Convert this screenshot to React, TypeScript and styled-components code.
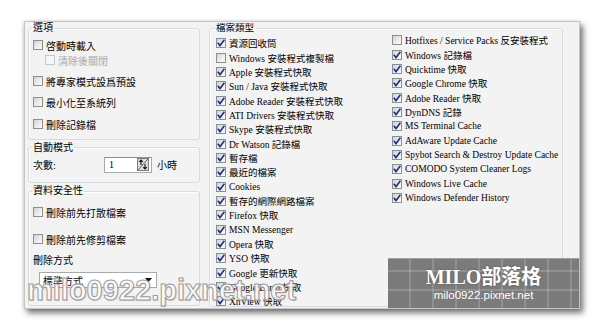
import React from "react";
import styled, { createGlobalStyle } from "styled-components";

const GlobalStyle = createGlobalStyle`
  html, body {
    margin: 0;
    padding: 0;
    background: #fff;
  }
  body {
    width: 600px;
    height: 329px;
    overflow: hidden;
    font-family: "Liberation Serif", "Noto Sans CJK TC", serif;
    font-size: 9.5px;
    color: #000;
  }
`;

const Page = styled.div`
  padding: 21px 0 0 24px;
`;

const Panel = styled.div`
  position: relative;
  box-sizing: border-box;
  width: 556px;
  height: 288px;
  display: flex;
  gap: 9px;
  padding: 0 3px 2px 3px;
  background: #f3f3f3;
  border: 1px solid #c6c6c6;
  box-shadow: 3px 4px 6px rgba(0, 0, 0, 0.55), -1px 0 3px rgba(0, 0, 0, 0.12);
`;

const LeftColumn = styled.div`
  display: flex;
  flex-direction: column;
  gap: 2px;
  width: 172px;
  flex: none;
  font-size: 10px;
`;

const GroupBox = styled.fieldset<{ $h: number; $pl?: number }>`
  box-sizing: border-box;
  margin: 0;
  min-width: 0;
  height: ${(p) => p.$h}px;
  padding: 0 4px 0 ${(p) => p.$pl ?? 4}px;
  border: 1px solid #d3dde3;
  border-radius: 3px;
  box-shadow: inset 1px 1px 0 #fff;
`;

const Legend = styled.legend`
  padding: 0 1px;
  margin-left: -1px;
  line-height: 12px;
  height: 12px;
`;

const CheckRow = styled.div<{ $mt?: number; $indent?: number; $disabled?: boolean; $h?: number }>`
  display: flex;
  align-items: center;
  gap: 3px;
  height: ${(p) => p.$h ?? 14}px;
  margin-top: ${(p) => p.$mt ?? 0}px;
  margin-left: ${(p) => p.$indent ?? 0}px;
  color: ${(p) => (p.$disabled ? "#a8a8a8" : "#000")};
  white-space: nowrap;
`;

const Box = styled.span<{ $disabled?: boolean }>`
  flex: none;
  box-sizing: border-box;
  width: 10px;
  height: 10px;
  display: flex;
  align-items: center;
  justify-content: center;
  border: 1px solid ${(p) => (p.$disabled ? "#c8c8c8" : "#8d8e8e")};
  background: ${(p) =>
    p.$disabled
      ? "#f6f6f6"
      : "linear-gradient(135deg, #d2d2d2 0%, #ececec 55%, #fbfbfb 100%)"};
`;

const Checkbox = ({ label, checked, disabled, mt, indent, h }: {
  label: string;
  checked?: boolean;
  disabled?: boolean;
  mt?: number;
  indent?: number;
  h?: number;
}) => (
  <CheckRow $mt={mt} $indent={indent} $disabled={disabled} $h={h}>
    <Box $disabled={disabled}>
      {checked && (
        <svg width="8" height="8" viewBox="0 0 8 8">
          <path d="M0.8 3.8 L3 6.6 L7.4 0.8" fill="none" stroke="#1e2f8f" strokeWidth="1.6" />
        </svg>
      )}
    </Box>
    <span>{label}</span>
  </CheckRow>
);

const FieldRow = styled.div<{ $mt?: number }>`
  display: flex;
  align-items: center;
  height: 16px;
  margin-top: ${(p) => p.$mt ?? 0}px;
`;

const FieldLabel = styled.span`
  width: 71px;
  flex: none;
`;

const SpinInput = styled.div`
  box-sizing: border-box;
  width: 48px;
  height: 16px;
  display: flex;
  align-items: center;
  justify-content: space-between;
  padding: 0 2px 0 4px;
  background: #fff;
  border: 1px solid #a7abb0;
  border-top-color: #8c9095;
`;

const Unit = styled.span`
  margin-left: 5px;
`;

const Caption = styled.div<{ $mt?: number }>`
  height: 12px;
  line-height: 12px;
  margin-top: ${(p) => p.$mt ?? 0}px;
`;

const Select = styled.div<{ $mt?: number }>`
  box-sizing: border-box;
  width: 118px;
  height: 16px;
  margin: ${(p) => p.$mt ?? 0}px 0 0 6px;
  display: flex;
  align-items: center;
  justify-content: space-between;
  padding: 0 4px 0 3px;
  background: #fff;
  border: 1px solid #a5aab0;
`;

const Columns = styled.div`
  display: flex;
`;

const Column = styled.div<{ $w?: number; $mt: number }>`
  width: ${(p) => (p.$w ? `${p.$w}px` : "auto")};
  flex: none;
  margin-top: ${(p) => p.$mt}px;
`;

const Badge = styled.div`
  position: absolute;
  left: 363px;
  top: 236px;
  width: 191px;
  height: 49px;
  display: flex;
  flex-direction: column;
  align-items: center;
  justify-content: center;
  background-color: #7b7b7b;
  background-image:
    repeating-linear-gradient(90deg, transparent 0 21px, rgba(255, 255, 255, 0.16) 21px 23px),
    repeating-linear-gradient(0deg, transparent 0 17px, rgba(255, 255, 255, 0.16) 17px 19px);
  border-top: 1px solid #a0a0a0;
  color: #fff;
  z-index: 2;
`;

const BadgeTitle = styled.div`
  font-family: "Liberation Serif", "Noto Sans CJK TC", serif;
  font-weight: bold;
  font-size: 20px;
  line-height: 22px;
  text-shadow: 0 0 2px rgba(0, 0, 0, 0.35);
`;

const BadgeUrl = styled.div`
  font-family: "Liberation Sans", Arial, sans-serif;
  font-size: 11.5px;
  line-height: 14px;
`;

const BigMark = styled.div`
  position: absolute;
  left: 2px;
  top: 254px;
  font-family: "Liberation Sans", Arial, sans-serif;
  font-weight: bold;
  font-size: 29px;
  line-height: 29px;
  color: rgba(255, 255, 255, 0.9);
  -webkit-text-stroke: 1px #9a9a9a;
  text-shadow: 1px 1px 1px rgba(0, 0, 0, 0.15);
  white-space: nowrap;
  z-index: 3;
  pointer-events: none;
`;

const SpinIcon = () => (
  <svg width="12" height="13" viewBox="0 0 12 13">
    <rect x="0.5" y="0.5" width="11" height="12" fill="#dcdcdc" stroke="#7d7d7d" />
    <path d="M1 12 L11 1" stroke="#666" strokeWidth="1" />
    <path d="M4 7 V2 M2.3 3.8 L4 2 L5.7 3.8" fill="none" stroke="#111" strokeWidth="1.1" />
    <path d="M8 6 V11 M6.3 9.2 L8 11 L9.7 9.2" fill="none" stroke="#111" strokeWidth="1.1" />
  </svg>
);

const DropArrow = () => (
  <svg width="7" height="4" viewBox="0 0 7 4">
    <path d="M0 0 H7 L3.5 4 Z" fill="#111" />
  </svg>
);

const fileTypesLeft: [string, boolean][] = [
  ["資源回收筒", true],
  ["Windows 安裝程式複製檔", false],
  ["Apple 安裝程式快取", true],
  ["Sun / Java 安裝程式快取", true],
  ["Adobe Reader 安裝程式快取", true],
  ["ATI Drivers 安裝程式快取", true],
  ["Skype 安裝程式快取", true],
  ["Dr Watson 記錄檔", true],
  ["暫存檔", true],
  ["最近的檔案", true],
  ["Cookies", true],
  ["暫存的網際網路檔案", true],
  ["Firefox 快取", true],
  ["MSN Messenger", true],
  ["Opera 快取", true],
  ["YSO 快取", true],
  ["Google 更新快取", true],
  ["Google Earth 快取", true],
  ["XnView 快取", true],
];

const fileTypesRight: [string, boolean][] = [
  ["Hotfixes / Service Packs 反安裝程式", false],
  ["Windows 記錄檔", true],
  ["Quicktime 快取", true],
  ["Google Chrome 快取", true],
  ["Adobe Reader 快取", true],
  ["DynDNS 記錄", true],
  ["MS Terminal Cache", true],
  ["AdAware Update Cache", true],
  ["Spybot Search & Destroy Update Cache", true],
  ["COMODO System Cleaner Logs", true],
  ["Windows Live Cache", true],
  ["Windows Defender History", true],
];

export default function App() {
  return (
    <>
      <GlobalStyle />
      <Page>
        <Panel>
          <LeftColumn>
            <GroupBox $h={118}>
              <Legend>選項</Legend>
              <Checkbox label="啓動時載入" mt={4} />
              <Checkbox label="清除後關閉" mt={1} indent={12} disabled />
              <Checkbox label="將專家模式設爲預設" mt={7} />
              <Checkbox label="最小化至系統列" mt={7} />
              <Checkbox label="刪除記錄檔" mt={8} />
            </GroupBox>
            <GroupBox $h={42}>
              <Legend>自動模式</Legend>
              <FieldRow $mt={3}>
                <FieldLabel>次數:</FieldLabel>
                <SpinInput>
                  <span>1</span>
                  <SpinIcon />
                </SpinInput>
                <Unit>小時</Unit>
              </FieldRow>
            </GroupBox>
            <GroupBox $h={121}>
              <Legend>資料安全性</Legend>
              <Checkbox label="刪除前先打散檔案" mt={8} />
              <Checkbox label="刪除前先修剪檔案" mt={13} />
              <Caption $mt={9}>刪除方式</Caption>
              <Select $mt={5}>
                <span>標準方式</span>
                <DropArrow />
              </Select>
            </GroupBox>
          </LeftColumn>
          <GroupBox $h={285} $pl={6}>
            <Legend>檔案類型</Legend>
            <Columns>
              <Column $w={176} $mt={2}>
                {fileTypesLeft.map(([label, checked]) => (
                  <Checkbox key={label} label={label} checked={checked} h={14.35} />
                ))}
              </Column>
              <Column $mt={-1}>
                {fileTypesRight.map(([label, checked]) => (
                  <Checkbox key={label} label={label} checked={checked} h={14.35} />
                ))}
              </Column>
            </Columns>
          </GroupBox>
          <Badge>
            <BadgeTitle>MILO部落格</BadgeTitle>
            <BadgeUrl>milo0922.pixnet.net</BadgeUrl>
          </Badge>
          <BigMark>milo0922.pixnet.net</BigMark>
        </Panel>
      </Page>
    </>
  );
}
